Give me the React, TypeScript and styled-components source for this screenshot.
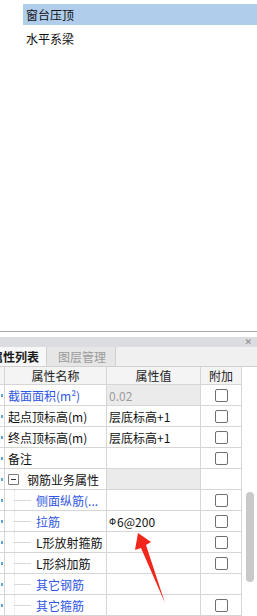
import React from 'react';
import styled, { createGlobalStyle } from 'styled-components';

const GlobalStyle = createGlobalStyle`
  html, body {
    margin: 0;
    padding: 0;
    background: #fff;
  }
  body {
    font-family: 'Noto Sans CJK SC', 'Microsoft YaHei', sans-serif;
    font-size: 12px;
    color: #1a1a1a;
  }
`;

const StyledPage = styled.div`
  position: relative;
  display: flex;
  flex-direction: column;
  width: 257px;
  height: 616px;
  overflow: hidden;
`;

const StyledList = styled.ul`
  flex: 0 0 331px;
  margin: 0;
  padding: 4px 0 0 23px;
  list-style: none;
  box-sizing: border-box;
`;

const ListItem = styled.li<{ $active?: boolean }>`
  height: 21px;
  margin-bottom: 3px;
  padding-left: 3px;
  line-height: 21px;
  background: ${({ $active }) => ($active ? '#b0cdec' : 'transparent')};
  color: #111;
`;

const StyledPanel = styled.section`
  flex: 1;
  display: flex;
  flex-direction: column;
  border-top: 1px solid #a8a8a8;
  padding-top: 5px;
  overflow: hidden;
`;

const TitleBar = styled.div`
  display: flex;
  justify-content: flex-end;
  align-items: center;
  height: 12px;
  padding-right: 5px;
  background: #dcdde0;
  color: #8a8a8a;
  font-family: 'DejaVu Sans', sans-serif;
  font-size: 9px;
`;

const TabStrip = styled.div`
  display: flex;
  height: 21px;
  border-bottom: 1px solid #d0d0d0;
  background: #f0f0f0;
`;

const Tab = styled.div<{ $active?: boolean }>`
  display: flex;
  align-items: center;
  padding: ${({ $active }) => ($active ? '0 7px 0 5px' : '0 9px 0 11px')};
  margin-left: ${({ $active }) => ($active ? '-14px' : '0')};
  border-right: 1px solid #d0d0d0;
  background: ${({ $active }) => ($active ? '#f7f7f7' : '#e6e6e6')};
  color: ${({ $active }) => ($active ? '#1a1a1a' : '#9a9a9a')};
  font-size: 12px;
  font-weight: ${({ $active }) => ($active ? 700 : 400)};
`;

const Row = styled.div`
  display: grid;
  grid-template-columns: 5px 102px 94px 41px 1fr;
  height: 21px;
`;

const Cell = styled.div<{ $bg?: string; $center?: boolean; $last?: boolean }>`
  display: flex;
  align-items: center;
  justify-content: ${({ $center }) => ($center ? 'center' : 'flex-start')};
  box-sizing: border-box;
  border-right: ${({ $last }) => ($last ? 'none' : '1px solid #d6d6d6')};
  border-bottom: ${({ $last }) => ($last ? 'none' : '1px solid #d6d6d6')};
  background: ${({ $bg }) => $bg || '#fff'};
  white-space: nowrap;
  overflow: hidden;
`;

const HeadCell = styled(Cell)`
  background: #f4f4f4;
  color: #222;
`;

const Marker = styled.span`
  width: 2px;
  height: 3px;
  background: #5ea6d8;
`;

const NameCell = styled(Cell)<{ $indent?: boolean }>`
  position: relative;
  padding-left: ${({ $indent }) => ($indent ? '31px' : '3px')};

  ${({ $indent }) =>
    $indent &&
    `
    &:before {
      content: '';
      position: absolute;
      left: 9px;
      top: 0;
      bottom: 0;
      border-left: 1px dotted #e2e2e2;
    }
    &:after {
      content: '';
      position: absolute;
      left: 9px;
      top: 10px;
      width: 17px;
      border-top: 1px solid #d8d8d8;
    }
  `}
`;

const Label = styled.span<{ $blue?: boolean }>`
  color: ${({ $blue }) => ($blue ? '#2f55e4' : '#111')};
`;

const Value = styled.span<{ $muted?: boolean }>`
  padding-left: 2px;
  color: ${({ $muted }) => ($muted ? '#9c9c9c' : '#111')};
`;

const Rebar = styled.span`
  font-family: 'DejaVu Sans', sans-serif;
  font-size: 9px;
  vertical-align: 2px;
  margin-right: 1px;
`;

const Checkbox = styled.span`
  width: 13px;
  height: 13px;
  box-sizing: border-box;
  border: 1px solid #6f6f6f;
  border-radius: 2px;
  background: #fff;
`;

const Toggle = styled.span`
  display: flex;
  align-items: center;
  justify-content: center;
  width: 11px;
  height: 11px;
  box-sizing: border-box;
  margin-right: 8px;
  border: 1px solid #7a7a7a;
  border-radius: 1px;

  &:before {
    content: '';
    width: 5px;
    border-top: 1px solid #333;
  }
`;

const Rows = styled.div`
  position: relative;
`;

const Scrollbar = styled.div`
  position: absolute;
  left: 246px;
  top: 107px;
  width: 8px;
  height: 90px;
  border-radius: 4px;
  background: #c9c9c9;
`;

const Arrow = styled.svg`
  position: absolute;
  left: 0;
  top: 0;
  pointer-events: none;
`;

type Prop = {
  name: string;
  value?: React.ReactNode;
  blue?: boolean;
  muted?: boolean;
  child?: boolean;
  check?: boolean;
  group?: boolean;
};

const props: Prop[] = [
  { name: '截面面积(m²)', value: '0.02', blue: true, muted: true, check: true },
  { name: '起点顶标高(m)', value: '层底标高+1', check: true },
  { name: '终点顶标高(m)', value: '层底标高+1', check: true },
  { name: '备注', check: true },
  { name: '钢筋业务属性', group: true },
  { name: '侧面纵筋(...', blue: true, child: true, check: true },
  {
    name: '拉筋',
    value: (
      <>
        <Rebar>Φ</Rebar>6@200
      </>
    ),
    blue: true,
    child: true,
    check: true,
  },
  { name: 'L形放射箍筋', child: true, check: true },
  { name: 'L形斜加筋', child: true, check: true },
  { name: '其它钢筋', blue: true, child: true },
  { name: '其它箍筋', blue: true, child: true, check: true },
];

const App = () => (
  <StyledPage>
    <GlobalStyle />
    <StyledList>
      <ListItem $active>窗台压顶</ListItem>
      <ListItem>水平系梁</ListItem>
    </StyledList>

    <StyledPanel>
      <TitleBar>✕</TitleBar>
      <TabStrip>
        <Tab $active>属性列表</Tab>
        <Tab>图层管理</Tab>
      </TabStrip>

      <Row>
        <HeadCell />
        <HeadCell $center>属性名称</HeadCell>
        <HeadCell $center>属性值</HeadCell>
        <HeadCell $center>附加</HeadCell>
        <Cell $last />
      </Row>

      <Rows>
        {props.map((p, i) => (
          <Row key={i}>
            <Cell $center>
              <Marker />
            </Cell>
            <NameCell $indent={p.child}>
              {p.group && <Toggle />}
              <Label $blue={p.blue}>{p.name}</Label>
            </NameCell>
            <Cell $bg={p.muted || p.group ? '#ebebeb' : undefined}>
              {p.value && <Value $muted={p.muted}>{p.value}</Value>}
            </Cell>
            <Cell $center>{p.check && <Checkbox />}</Cell>
            <Cell $last />
          </Row>
        ))}
        <Scrollbar />
      </Rows>
    </StyledPanel>

    <Arrow width='257' height='616' viewBox='0 0 257 616'>
      <polygon
        points='138,533 151,542 146,545 165,603 141,548 135,550'
        fill='#f2261b'
      />
    </Arrow>
  </StyledPage>
);

export default App;
